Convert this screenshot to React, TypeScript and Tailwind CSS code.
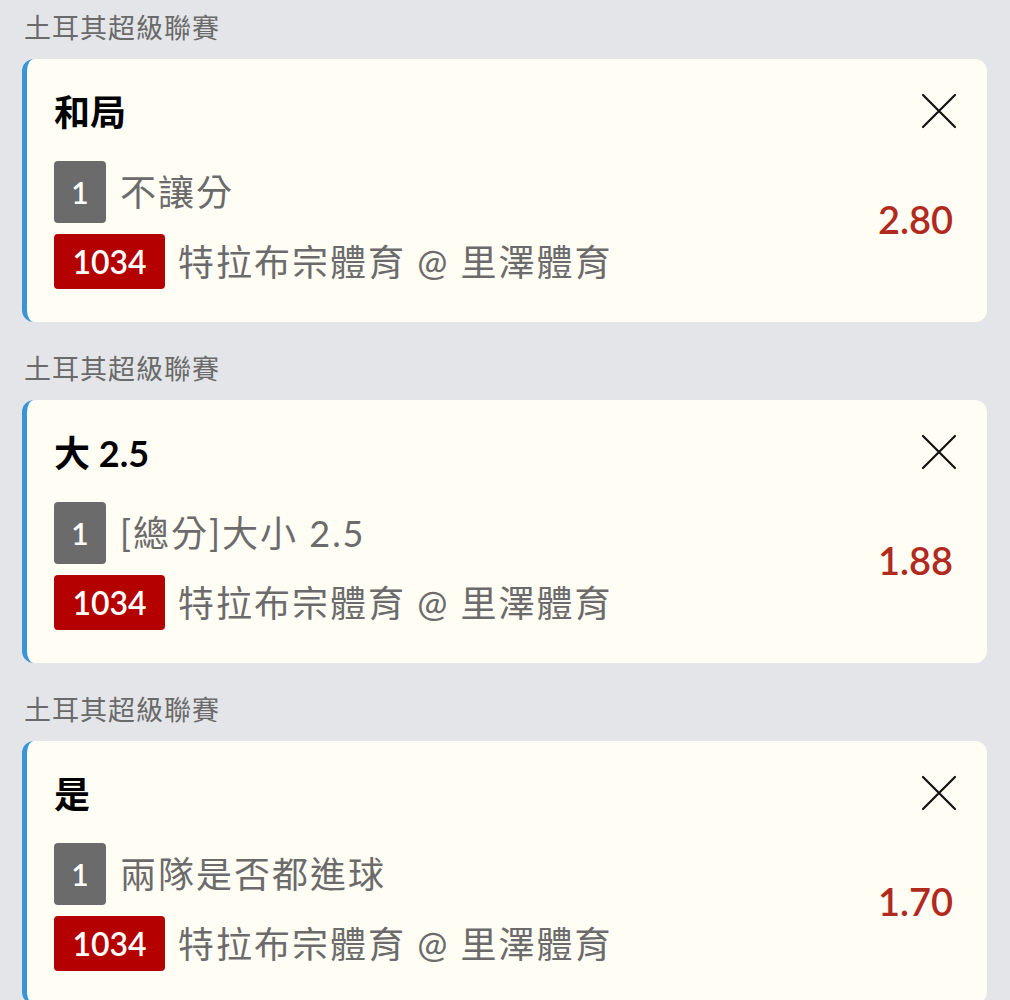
import React from 'react';

interface Bet {
    league: string;
    title: string;
    market: string;
    code: string;
    match: string;
    odds: string;
}

const bets: Bet[] = [
    { league: '土耳其超級聯賽', title: '和局', market: '不讓分', code: '1034', match: '特拉布宗體育 @ 里澤體育', odds: '2.80' },
    { league: '土耳其超級聯賽', title: '大 2.5', market: '[總分]大小 2.5', code: '1034', match: '特拉布宗體育 @ 里澤體育', odds: '1.88' },
    { league: '土耳其超級聯賽', title: '是', market: '兩隊是否都進球', code: '1034', match: '特拉布宗體育 @ 里澤體育', odds: '1.70' },
];

const font = "font-['Lato','Noto_Sans_CJK_TC',sans-serif]";

const BetCard: React.FC<{ bet: Bet }> = ({ bet }) => (
    <div>
        <div className="h-[59px] pl-[2px] pt-[11px] text-[27px] leading-[34px] tracking-[1px] text-[#6a6a6a]">
            {bet.league}
        </div>
        <div className="flex h-[263px] rounded-[12px] border-l-[5px] border-[#3a95d6] bg-[#fffdf4] pl-[27px] pr-[34px] pt-[33px]">
            <div className="flex-1">
                <div className="text-[36px] font-bold leading-[40px] text-black">{bet.title}</div>
                <div className="mt-[29px] flex items-center">
                    <span className="flex h-[62px] w-[52px] items-center justify-center rounded-[4px] bg-[#6b6b6b] text-[30px] font-semibold text-white">
                        1
                    </span>
                    <span className="ml-[14px] text-[36px] font-normal tracking-[2px] text-[#6b6b6b]">{bet.market}</span>
                </div>
                <div className="mt-[11px] flex items-center">
                    <span className="flex h-[55px] w-[111px] items-center justify-center rounded-[4px] bg-[#b50000] text-[32px] font-semibold text-white">
                        {bet.code}
                    </span>
                    <span className="ml-[13px] text-[36px] font-normal tracking-[2px] text-[#6b6b6b]">{bet.match}</span>
                </div>
            </div>
            <div className="flex flex-col items-end">
                <svg className="mt-[1px] mr-[-4px]" width="36" height="36" viewBox="0 0 36 36" fill="none" stroke="#111" strokeWidth="2.2" strokeLinecap="round">
                    <path d="M2 2L34 34M34 2L2 34" />
                </svg>
                <div className="mt-[70px] text-[38px] font-semibold leading-[40px] text-[#b02a1d]">{bet.odds}</div>
            </div>
        </div>
        <div className="h-[19px]" />
    </div>
);

export default function App() {
    return (
        <div className={`min-h-[1000px] w-[1010px] bg-[#e4e5e8] pl-[22px] pr-[23px] ${font}`}>
            {bets.map((b, i) => (
                <BetCard key={i} bet={b} />
            ))}
        </div>
    );
}
